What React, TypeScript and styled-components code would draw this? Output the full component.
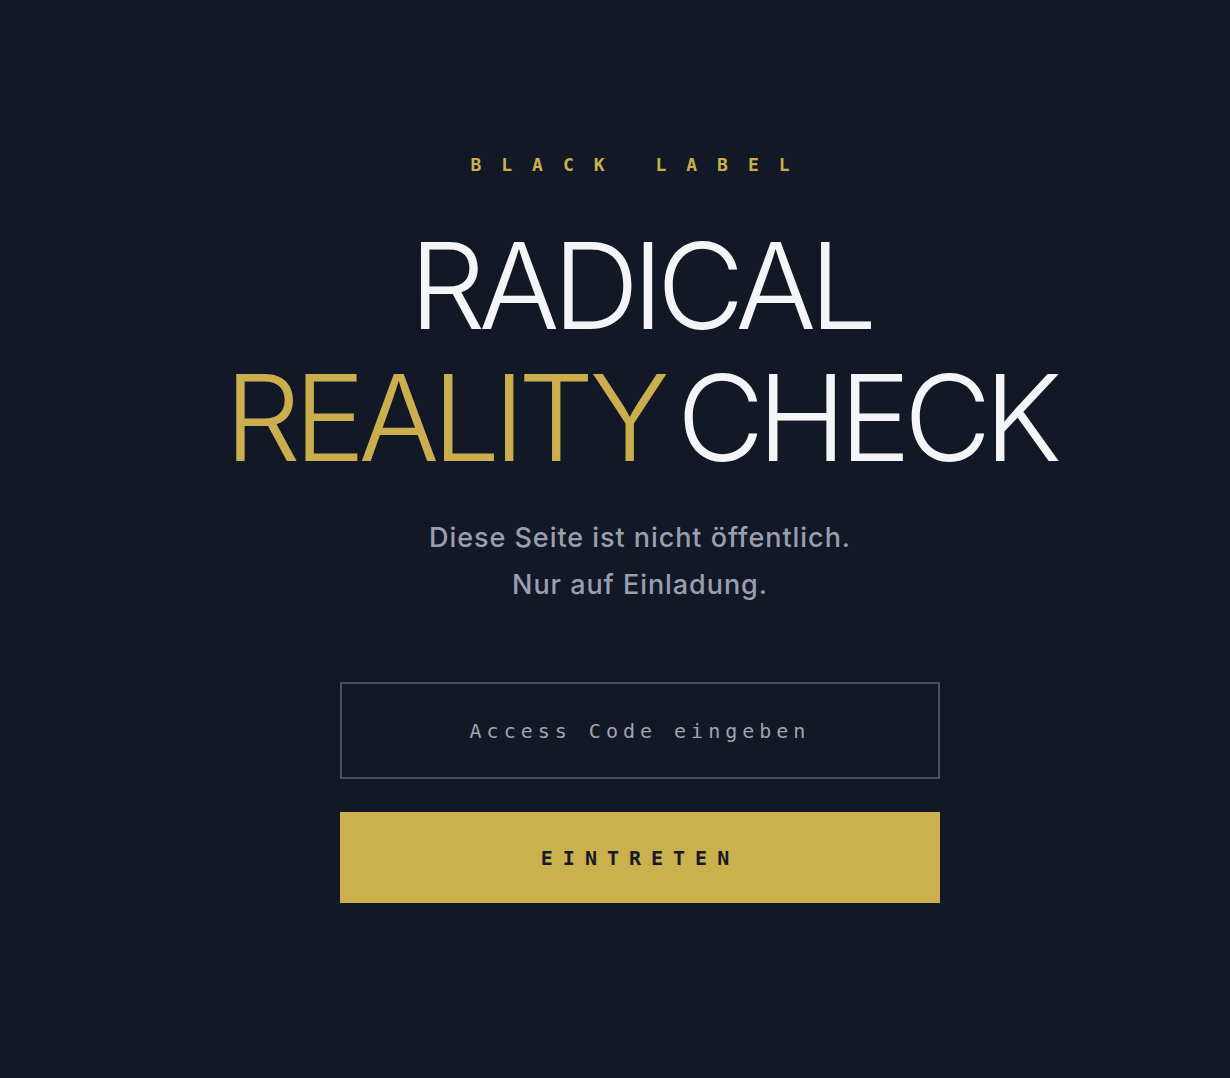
import styled, { createGlobalStyle } from "styled-components";

const GlobalStyle = createGlobalStyle`
  html, body {
    margin: 0;
    padding: 0;
    background: #121826;
  }
  * {
    box-sizing: border-box;
  }
`;

const Page = styled.main`
  min-height: 100vh;
  padding: 156px 0 0 50px;
  display: flex;
  flex-direction: column;
  align-items: center;
  background: #121826;
  font-family: Inter, "Noto Sans", sans-serif;
`;

const Eyebrow = styled.div`
  font-family: "DejaVu Sans Mono", "Liberation Mono", monospace;
  font-size: 18px;
  line-height: 18px;
  font-weight: bold;
  letter-spacing: 20px;
  color: #cbaf4e;
`;

const Title = styled.h1`
  margin: 46px 0 0;
  font-size: 120px;
  line-height: 132px;
  font-weight: 300;
  letter-spacing: -0.057em;
  text-align: center;
  color: #f4f5f7;
`;

const Line = styled.span`
  display: flex;
  justify-content: center;
  gap: 14px;
`;

const Word = styled.span<{ $gold?: boolean }>`
  color: ${(p) => (p.$gold ? "#cbaf4e" : "#f4f5f7")};
`;

const Subtitle = styled.p`
  margin: 30px 0 0;
  font-size: 27px;
  line-height: 47px;
  font-weight: 500;
  letter-spacing: 0.035em;
  color: #9a9eb0;
  text-align: center;
`;

const Form = styled.form`
  margin-top: 74px;
  width: 600px;
  display: flex;
  flex-direction: column;
  gap: 33px;
`;

const CodeInput = styled.input`
  width: 100%;
  height: 97px;
  border: 2px solid #4a5060;
  background: transparent;
  color: #e5e7eb;
  text-align: center;
  font-family: "DejaVu Sans Mono", "Liberation Mono", monospace;
  font-size: 20px;
  letter-spacing: 5px;
  padding: 0;
  outline: none;

  &::placeholder {
    color: #a0a4b2;
  }
`;

const SubmitButton = styled.button`
  width: 100%;
  height: 91px;
  border: none;
  background: #cbb04e;
  color: #141a27;
  font-family: "DejaVu Sans Mono", "Liberation Mono", monospace;
  font-size: 20px;
  font-weight: bold;
  letter-spacing: 10px;
  padding: 0;
  cursor: pointer;
`;

export default function App() {
  return (
    <>
      <GlobalStyle />
      <Page>
        <Eyebrow>BLACK LABEL</Eyebrow>
        <Title>
          <Line>RADICAL</Line>
          <Line>
            <Word $gold>REALITY</Word>
            <Word>CHECK</Word>
          </Line>
        </Title>
        <Subtitle>
          Diese Seite ist nicht öffentlich.
          <br />
          Nur auf Einladung.
        </Subtitle>
        <Form onSubmit={(e) => e.preventDefault()}>
          <CodeInput placeholder="Access Code eingeben" />
          <SubmitButton type="submit">EINTRETEN</SubmitButton>
        </Form>
      </Page>
    </>
  );
}
